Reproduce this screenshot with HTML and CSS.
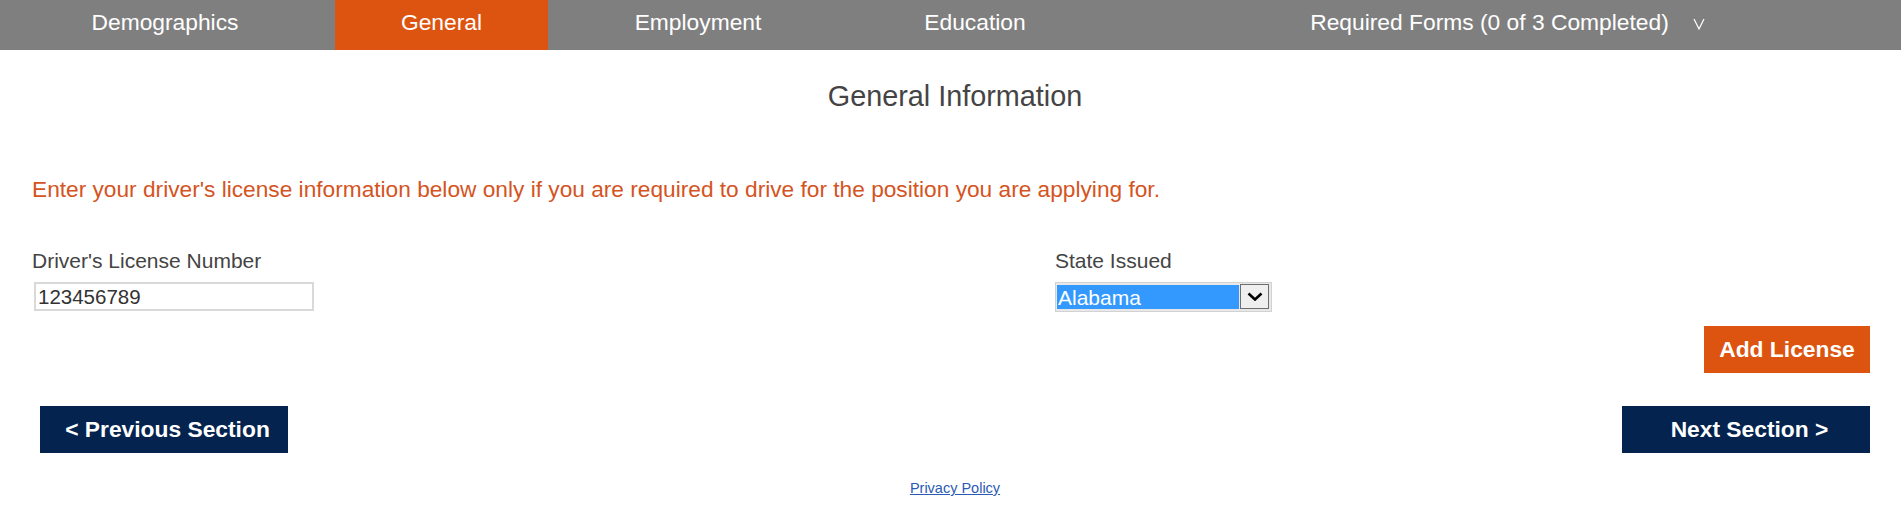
FILE: index.html
```html
<!DOCTYPE html>
<html lang="en">
<head>
<meta charset="utf-8">
<title>General Information</title>
<link rel="stylesheet" href="styles.css">
</head>
<body>
<nav class="tabs">
  <a class="tab tab-first" href="#">Demographics</a>
  <a class="tab tab-active" href="#">General</a>
  <a class="tab" href="#">Employment</a>
  <a class="tab" href="#">Education</a>
  <a class="tab tab-forms" href="#">Required Forms (0 of 3 Completed)
    <svg class="tab-chevron" width="12" height="12" viewBox="0 0 12 12"><path d="M1 1 L6 11 L11 1" fill="none" stroke="#fff" stroke-width="1.2"/></svg>
  </a>
</nav>
<main class="page">
  <h1 class="title">General Information</h1>
  <p class="notice">Enter your driver's license information below only if you are required to drive for the position you are applying for.</p>
  <div class="fields">
    <div class="field">
      <label class="field-label" for="dl">Driver's License Number</label>
      <input class="text-input" id="dl" type="text" value="123456789">
    </div>
    <div class="field">
      <span class="field-label">State Issued</span>
      <div class="select">
        <span class="select-value">Alabama</span>
        <span class="select-btn"><svg width="16" height="9" viewBox="0 0 16 9"><path d="M1.5 1.5 L8 7.5 L14.5 1.5" fill="none" stroke="#000" stroke-width="2.6"/></svg></span>
      </div>
    </div>
  </div>
  <div class="add-row">
    <button class="btn btn-orange btn-add" type="button">Add License</button>
  </div>
  <div class="section-nav">
    <button class="btn btn-navy btn-section" type="button">&lt; Previous Section</button>
    <button class="btn btn-navy btn-section" type="button">Next Section &gt;</button>
  </div>
  <footer class="footer"><a class="privacy" href="#">Privacy Policy</a></footer>
</main>
</body>
</html>
```

FILE: styles.css
```css
* { box-sizing: border-box; }
html, body { margin: 0; padding: 0; background: #fff; }
body { font-family: "Liberation Sans", Arial, sans-serif; color: #444; }

.tabs {
  display: grid;
  grid-template-columns: 335px 213px 300px 254px 1fr;
  height: 50px;
  background: #7f7f7f;
}
.tab {
  display: flex;
  align-items: center;
  justify-content: center;
  padding-bottom: 6px;
  color: #fff;
  text-decoration: none;
  font-size: 22.8px;
}
.tab-first { padding-right: 5px; }
.tab-active { background: #dd5410; }
.tab-forms { gap: 24px; padding-left: 12px; }
.tab-chevron { margin-top: 3px; }

.page { padding: 0 31px 0 32px; }
.title {
  margin: 29px 0 0;
  padding-left: 8px;
  text-align: center;
  font-weight: normal;
  font-size: 28.8px;
  line-height: 34px;
  color: #444;
}
.notice {
  margin: 64px 0 0;
  font-size: 22.7px;
  line-height: 24px;
  color: #d4541f;
}
.fields {
  margin-top: 48px;
  display: grid;
  grid-template-columns: 1023px 1fr;
}
.field { display: flex; flex-direction: column; align-items: flex-start; }
.field-label { font-size: 21px; line-height: 24px; color: #444; margin-bottom: 9px; }
.text-input {
  margin-left: 2px;
  width: 280px;
  height: 29px;
  border: 2px solid #d9d9d9;
  padding: 0 2px;
  font-family: inherit;
  font-size: 20.5px;
  color: #333;
  outline: none;
}
.select {
  display: flex;
  width: 217px;
  height: 30px;
  border: 1px solid #d2d2d2;
  padding: 1px 2px 2px 1px;
  background: #e8e8e8;
}
.select-value {
  flex: 1;
  margin-top: 1px;
  background: #3399ff;
  color: #fff;
  font-size: 21px;
  line-height: 25px;
  padding-left: 1px;
}
.select-btn {
  width: 29px;
  margin-left: 1px;
  border: 1px solid #6e6e6e;
  background: #efefef;
  display: flex;
  align-items: center;
  justify-content: center;
}

.btn {
  border: 0;
  height: 47px;
  color: #fff;
  font-family: inherit;
  font-weight: bold;
  font-size: 22.8px;
  padding: 0;
  cursor: pointer;
}
.btn-orange { background: #dd5410; }
.btn-navy { background: #04244f; }
.btn-add { width: 166px; }
.btn-section { width: 248px; padding-left: 7px; }

.add-row { display: flex; justify-content: flex-end; margin-top: 14px; }
.section-nav {
  display: flex;
  justify-content: space-between;
  margin-top: 33px;
  padding-left: 8px;
}
.footer { text-align: center; margin-top: 26px; padding-left: 8px; }
.privacy { font-size: 14.5px; line-height: 17px; color: #2a5bb5; }
```
